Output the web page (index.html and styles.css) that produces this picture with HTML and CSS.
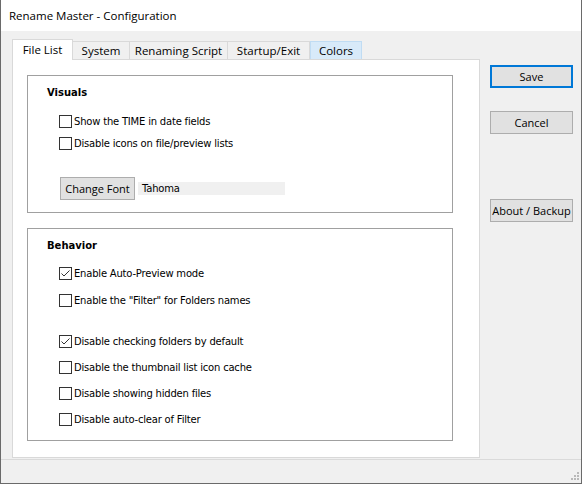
FILE: index.html
```html
<!DOCTYPE html>
<html>
<head>
<meta charset="utf-8">
<link rel="stylesheet" href="styles.css">
</head>
<body>
<div class="window">
  <div class="titlebar">Rename Master - Configuration</div>
  <div class="client">
    <div class="main">
      <div class="tabs-area">
        <div class="tabstrip">
          <div class="tab selected">File List</div>
          <div class="tab t-system">System</div>
          <div class="tab t-script">Renaming Script</div>
          <div class="tab t-startup">Startup/Exit</div>
          <div class="tab t-colors hover">Colors</div>
        </div>
        <div class="panel">
          <div class="group visuals">
            <div class="group-title">Visuals</div>
            <label class="check r-v1"><span class="box"></span><span class="lbl">Show the TIME in date fields</span></label>
            <label class="check r-v2"><span class="box"></span><span class="lbl">Disable icons on file/preview lists</span></label>
            <div class="font-row">
              <div class="btn btn-font">Change Font</div>
              <div class="font-field">Tahoma</div>
            </div>
          </div>
          <div class="group behavior">
            <div class="group-title">Behavior</div>
            <label class="check r-b1"><span class="box"><svg viewBox="0 0 11 11" width="11" height="11"><path d="M1.5 5.5 L4 8 L9.5 2.5" fill="none" stroke="#333" stroke-width="1"/></svg></span><span class="lbl">Enable Auto-Preview mode</span></label>
            <label class="check r-b2"><span class="box"></span><span class="lbl">Enable the "Filter" for Folders names</span></label>
            <label class="check r-b3"><span class="box"><svg viewBox="0 0 11 11" width="11" height="11"><path d="M1.5 5.5 L4 8 L9.5 2.5" fill="none" stroke="#333" stroke-width="1"/></svg></span><span class="lbl">Disable checking folders by default</span></label>
            <label class="check r-b4"><span class="box"></span><span class="lbl">Disable the thumbnail list icon cache</span></label>
            <label class="check r-b5"><span class="box"></span><span class="lbl">Disable showing hidden files</span></label>
            <label class="check r-b6"><span class="box"></span><span class="lbl">Disable auto-clear of Filter</span></label>
          </div>
        </div>
      </div>
      <div class="side">
        <div class="btn side-btn default">Save</div>
        <div class="btn side-btn cancel">Cancel</div>
        <div class="btn side-btn about">About / Backup</div>
      </div>
    </div>
    <div class="statusbar">
      <svg class="grip" width="9" height="9" viewBox="0 0 9 9">
        <rect x="6" y="0" width="2" height="2" fill="#b8b8b8"/>
        <rect x="3" y="3" width="2" height="2" fill="#b8b8b8"/>
        <rect x="6" y="3" width="2" height="2" fill="#b8b8b8"/>
        <rect x="0" y="6" width="2" height="2" fill="#b8b8b8"/>
        <rect x="3" y="6" width="2" height="2" fill="#b8b8b8"/>
        <rect x="6" y="6" width="2" height="2" fill="#b8b8b8"/>
      </svg>
    </div>
  </div>
</div>
</body>
</html>
```

FILE: styles.css
```css
html, body {
  margin: 0;
  padding: 0;
  background: #ffffff;
}
.window {
  width: 582px;
  height: 484px;
  box-sizing: border-box;
  border-left: 1px solid #6a6a6a;
  border-right: 1px solid #6a6a6a;
  border-bottom: 1px solid #6a6a6a;
  display: flex;
  flex-direction: column;
  font-family: "Open Sans", "Noto Sans", sans-serif;
  font-size: 11.5px;
  color: #000;
}
.titlebar {
  height: 31px;
  background: #fff;
  padding-left: 8px;
  line-height: 31px;
  font-size: 11.5px;
}
.client {
  flex: 1;
  background: #f0f0f0;
  display: flex;
  flex-direction: column;
}
.main {
  height: 428px;
  display: flex;
  padding: 8px 0 0 11px;
  box-sizing: border-box;
}
.tabs-area {
  width: 468px;
  display: flex;
  flex-direction: column;
}
.tabstrip {
  display: flex;
  align-items: flex-end;
  height: 20px;
  position: relative;
  z-index: 1;
}
.tab {
  height: 18px;
  box-sizing: border-box;
  border: 1px solid #d9d9d9;
  border-bottom: none;
  border-left: none;
  background: #f0f0f0;
  line-height: 17px;
  text-align: center;
  font-size: 11.5px;
}
.tab.selected {
  height: 21px;
  margin-bottom: -1px;
  background: #fff;
  border-left: 1px solid #d9d9d9;
  width: 61px;
  line-height: 20px;
}
.t-system { width: 57px; }
.t-script { width: 98px; }
.t-startup { width: 82px; }
.t-colors { width: 52px; }
.tab.hover {
  background: #d8eaf9;
  border: 1px solid #c0dcf3;
  border-bottom: none;
}
.panel {
  height: 399px;
  box-sizing: border-box;
  background: #fff;
  border: 1px solid #d9d9d9;
  padding: 15px 0 0 14px;
}
.group {
  width: 426px;
  box-sizing: border-box;
  border: 1px solid #a0a0a0;
  padding: 10px 0 0 19px;
  display: flex;
  flex-direction: column;
  font-family: "DejaVu Sans", sans-serif;
  font-size: 10px;
  letter-spacing: -0.2px;
}
.visuals { height: 138px; }
.behavior { height: 213px; margin-top: 15px; }
.group-title {
  font-weight: bold;
  height: 13px;
  line-height: 13px;
  font-size: 10px;
  letter-spacing: 0;
}
.check {
  display: flex;
  align-items: center;
  margin-left: 12px;
  height: 13px;
}
.box {
  width: 13px;
  height: 13px;
  box-sizing: border-box;
  border: 1px solid #333;
  background: #fff;
  display: flex;
  flex: none;
}
.lbl {
  margin-left: 2px;
  line-height: 13px;
  white-space: nowrap;
}
.r-v1 { margin-top: 16px; }
.r-v2 { margin-top: 9px; }
.r-b1 { margin-top: 15px; }
.r-b2 { margin-top: 14px; }
.r-b3 { margin-top: 28px; }
.r-b4 { margin-top: 13px; }
.r-b5 { margin-top: 13px; }
.r-b6 { margin-top: 13px; }
.font-row {
  display: flex;
  align-items: center;
  margin-top: 27px;
  margin-left: 13px;
}
.btn {
  box-sizing: border-box;
  background: #e1e1e1;
  border: 1px solid #adadad;
  text-align: center;
  font-family: "Open Sans", "Noto Sans", sans-serif;
  font-size: 11px;
  letter-spacing: 0;
  white-space: nowrap;
}
.btn-font {
  width: 75px;
  height: 23px;
  line-height: 21px;
}
.font-field {
  margin-left: 3px;
  width: 147px;
  height: 13px;
  line-height: 13px;
  background: #f0f0f0;
  padding-left: 4px;
  box-sizing: border-box;
  font-size: 10px;
}
.side {
  margin-left: 10px;
  padding-top: 26px;
  display: flex;
  flex-direction: column;
}
.side-btn {
  width: 83px;
  height: 23px;
  line-height: 21px;
}
.side-btn.default {
  border: 2px solid #0078d7;
  line-height: 19px;
}
.cancel { margin-top: 23px; }
.about { margin-top: 65px; }
.statusbar {
  flex: 1;
  border-top: 1px solid #dadada;
  display: flex;
  justify-content: flex-end;
  align-items: flex-end;
}
.grip {
  margin: 0 1px 2px 0;
}
```
